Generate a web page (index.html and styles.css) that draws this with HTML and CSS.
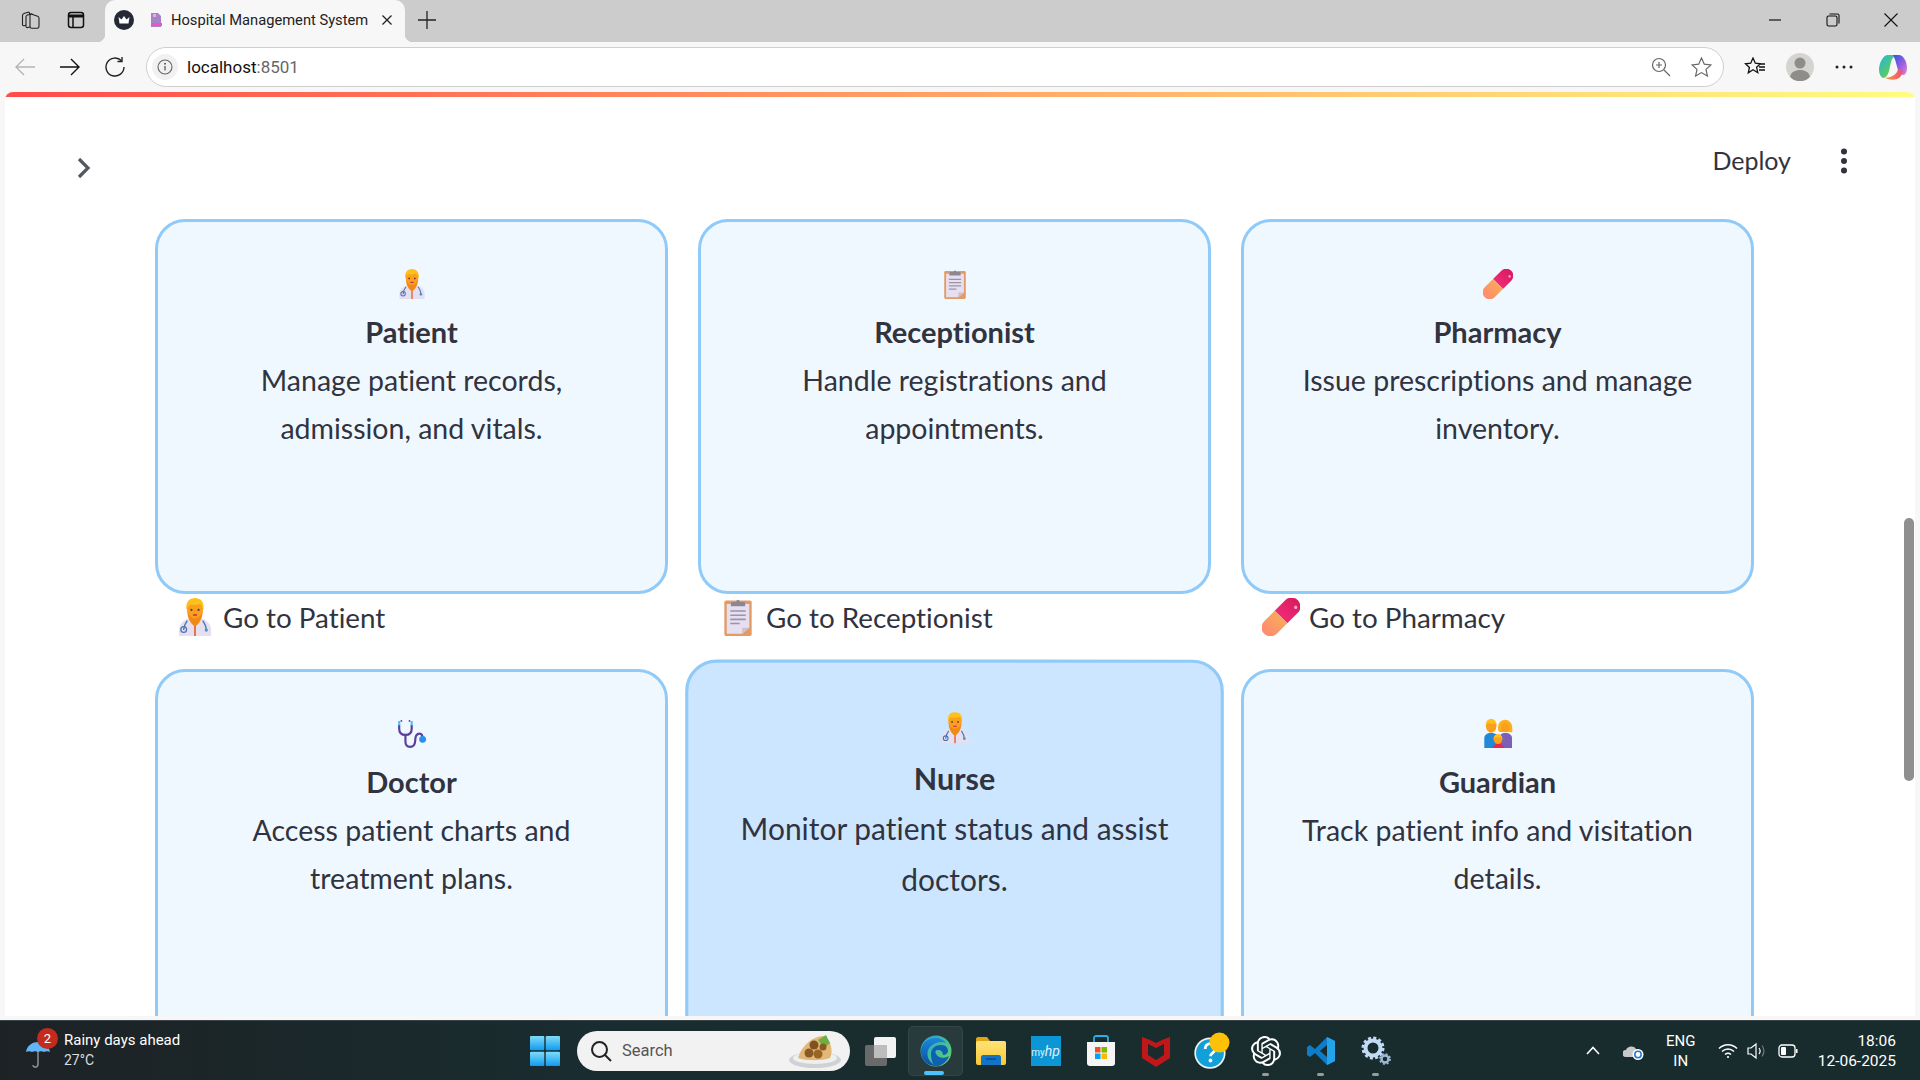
FILE: index.html
```html
<!DOCTYPE html>
<html>
	<head>
		<meta charset="utf-8">
		<title>Hospital Management System</title>
		<link rel="stylesheet" href="styles.css">
	</head>
	<body>
	<svg class="sprite" xmlns="http://www.w3.org/2000/svg">
		<defs>
			<linearGradient id="edgeGreen" x1="0" y1="0" x2="1" y2="1"><stop offset="0" stop-color="#1ba0e2"/><stop offset="1" stop-color="#6bd85a"/></linearGradient>
			<linearGradient id="edgeBlue" x1="0" y1="0" x2="0" y2="1"><stop offset="0" stop-color="#1b86d8"/><stop offset="1" stop-color="#0c4f9e"/></linearGradient>
			<linearGradient id="winBlue" x1="0" y1="0" x2="0" y2="1"><stop offset="0" stop-color="#7fdcf8"/><stop offset="1" stop-color="#0f9bf0"/></linearGradient>
			<linearGradient id="folder" x1="0" y1="0" x2="0" y2="1"><stop offset="0" stop-color="#ffe27a"/><stop offset="1" stop-color="#f8c92f"/></linearGradient>
			<linearGradient id="copA" x1="0" y1="0" x2="1" y2="1"><stop offset="0" stop-color="#23b5e8"/><stop offset=".6" stop-color="#55c96a"/><stop offset="1" stop-color="#f4d13b"/></linearGradient>
			<linearGradient id="copB" x1="0" y1="0" x2="1" y2="1"><stop offset="0" stop-color="#2458e0"/><stop offset=".6" stop-color="#a55ee0"/><stop offset="1" stop-color="#e38ad0"/></linearGradient>
			<linearGradient id="copC" x1="0" y1="0" x2="1" y2="0"><stop offset="0" stop-color="#f3a13c"/><stop offset="1" stop-color="#ee4d7a"/></linearGradient>
			<linearGradient id="pillPink" x1="0" y1="0" x2="0" y2="1"><stop offset="0" stop-color="#d81b60"/><stop offset="1" stop-color="#f02a76"/></linearGradient>
			<linearGradient id="pillOrange" x1="0" y1="0" x2="0" y2="1"><stop offset="0" stop-color="#f9a85c"/><stop offset="1" stop-color="#ff8a70"/></linearGradient>
		</defs>
		<symbol id="e-worker" viewBox="0 0 32 32">
			<path d="M2.500 32v-5c0-5 4-9 9-10h9c5 1 9 5 9 10v5z" fill="#e6dfef"/>
			<path d="M9.500 19c-2 3-3 5-3 8M22.500 19c2 3 3 5 3 8" stroke="#4a76b8" stroke-width="1.200" fill="none"/>
			<circle cx="6.500" cy="26.500" r="2.400" fill="none" stroke="#4a76b8" stroke-width="1.100"/>
			<circle cx="25.500" cy="27" r="1.400" fill="#3f9bd0"/>
			<path d="M16 16v16" stroke="#e5541f" stroke-width="1.300"/>
			<path d="M9.500 11c0 6 3 11 6.500 13 3.500-2 6.500-7 6.500-13z" fill="#f08a14"/>
			<ellipse cx="16" cy="9" rx="6.800" ry="8" fill="#fb9f1c"/>
			<path d="M8.800 10C8 3 11.500 0 16 0s8 3 7.200 10c-1-3-2-4.500-3.200-5-3 1-5.500 1-8 .5-1.500 1-2.700 2-3.200 4.500z" fill="#fcc21b"/>
			<circle cx="13" cy="10" r=".9" fill="#5b3a29"/><circle cx="19" cy="10" r=".9" fill="#5b3a29"/>
			<path d="M14.300 14.300h3.400" stroke="#c2185b" stroke-width="1.100"/>
		</symbol>
		<symbol id="e-clipboard" viewBox="0 0 32 32">
			<rect x="4.500" y="2" width="23" height="30" rx="1.500" fill="#e39a63"/>
			<path d="M6.500 5h19v20l-6 5h-13z" fill="#e6dff0"/>
			<path d="M25.500 25l-6 5v-5z" fill="#cdbfd4"/>
			<path d="M9.500 11h13M9.500 14.500h13M9.500 18h13M9.500 21.500h8" stroke="#9b93a8" stroke-width="1.300"/>
			<path d="M10 7V4.500c0-.8.500-1.200 1.200-1.200h3.300C15 1 17 1 17.500 3.300h3.300c.7 0 1.200.4 1.200 1.200V7z" fill="#8d8692"/>
		</symbol>
		<symbol id="e-pill" viewBox="0 0 32 32">
			<g transform="rotate(45 16 16)">
				<path d="M8.500 16V3.500a7.500 7.500 0 0 1 15 0V16z" fill="url(#pillPink)"/>
				<path d="M8.500 16v12.500a7.500 7.500 0 0 0 15 0V16z" fill="url(#pillOrange)"/>
				<circle cx="19" cy="1.500" r="1.400" fill="#f9a5c4"/>
			</g>
		</symbol>
		<symbol id="e-stetho" viewBox="78 56 96 96">
			<path d="M85 75v12q0 20 20 20t20-20V75" fill="none" stroke="#5b3fa0" stroke-width="7"/>
			<path d="M85 62v14M125 62v14" fill="none" stroke="#4fc3f7" stroke-width="7"/>
			<path d="M105 107v22q0 16 15 16t16-18q0-24 14-24 10 0 10 16" fill="none" stroke="#5b3fa0" stroke-width="7"/>
			<circle cx="160" cy="121" r="11" fill="#2b8ff0"/>
			<circle cx="92" cy="62" r="3" fill="#5b3fa0"/><circle cx="118" cy="62" r="3" fill="#5b3fa0"/>
		</symbol>
		<symbol id="e-family" viewBox="126 58 92 92">
			<path d="M130 147v-30c0-10 8-16 20-16s25 6 25 16v30z" fill="#2288d8"/>
			<path d="M175 147v-30c0-10 8-16 20-16s20 6 20 16v30z" fill="#7d5fb5"/>
			<ellipse cx="151" cy="80" rx="16" ry="20" fill="#fb9f1c"/>
			<path d="M135 80c-2-14 6-22 16-22s18 8 16 22c-2-6-4-8-6-9-6 2-14 2-20 0-2 2-4 5-6 9z" fill="#fcc21b"/>
			<path d="M172 92c-2-20 8-32 22-32s24 12 22 36c-2 4-6 4-8 2H178c-2 0-4-2-6-6z" fill="#fbb01c"/>
			<ellipse cx="194" cy="84" rx="13" ry="15" fill="#fb9f1c"/>
			<path d="M156 147c0-8 6-13 16-13s18 5 18 13z" fill="#e5284f"/>
			<ellipse cx="172" cy="120" rx="13" ry="15" fill="#fb9f1c"/>
			<path d="M159 122c-2-10 4-17 13-17s15 7 13 17c-2-5-4-7-6-8-4 1-10 1-14 0-2 2-4 4-6 8z" fill="#fcc21b"/>
		</symbol>
	</svg>

	<div class="tabstrip">
		<div class="strip-btn">
			<svg width="20" height="20" viewBox="0 0 20 20" fill="#cccccc" stroke="#222" stroke-width="1.100"><path d="M1.500 5.500c0-1 .6-1.600 1.500-1.900L7 2.200c1-.3 1.600.3 1.600 1.300v9c0 1-.5 1.600-1.400 1.900l-3.900 1.300c-1 .3-1.800-.3-1.800-1.300z"/><path d="M5 7c0-1 .6-1.600 1.500-1.900l3.500-1.200c1-.3 1.700.3 1.700 1.300v9.300c0 1-.5 1.600-1.400 1.900l-3.400 1.100c-1 .3-1.900-.3-1.900-1.300z"/><path d="M9 5.500c0-1 .9-1.500 1.800-1.200l5.800 2c.9.300 1.400 1 1.400 1.900v8.300c0 1-.7 1.700-1.700 1.700H10.800c-1 0-1.800-.8-1.800-1.800z"/></svg>
		</div>
		<div class="strip-btn">
			<svg width="18" height="18" viewBox="0 0 18 18" fill="none" stroke="#111" stroke-width="1.500"><rect x="1.500" y="1.500" width="15" height="15" rx="2.500"/><path d="M1.500 5h15" stroke-width="3"/><path d="M6 5.500v11"/></svg>
		</div>
		<div class="tab">
			<svg class="favicon" width="20" height="20" viewBox="0 0 20 20"><circle cx="10" cy="10" r="10" fill="#252935"/><path d="M4.500 7l3 2.500L10 6l2.500 3.500 3-2.500-1 6.500h-9z" fill="#fff"/></svg>
			<svg class="favicon2" width="12" height="16" viewBox="0 0 12 16"><path d="M1 1h7l3 3v11H1z" fill="#a583c4"/><rect x="3" y="2" width="3" height="3" fill="#f3a6d8"/><rect x="1" y="11" width="11" height="3" fill="#e857c8"/></svg>
			<span class="tab-title">Hospital Management System</span>
			<svg class="tab-x" width="12" height="12" viewBox="0 0 12 12" stroke="#222" stroke-width="1.300"><path d="M1.500 1.500l9 9M10.500 1.500l-9 9"/></svg>
		</div>
		<div class="new-tab">
			<svg width="18" height="18" viewBox="0 0 18 18" stroke="#222" stroke-width="1.300"><path d="M9 0v18M0 9h18"/></svg>
		</div>
		<div class="win-controls">
			<div class="win-btn"><svg width="14" height="14" viewBox="0 0 14 14" stroke="#111" stroke-width="1.200"><path d="M1 7h12"/></svg></div>
			<div class="win-btn"><svg width="14" height="14" viewBox="0 0 14 14" stroke="#111" stroke-width="1.100" fill="none"><rect x="1" y="3" width="10" height="10" rx="1.500"/><path d="M3.500 1H11.500A1.500 1.500 0 0 1 13 2.500V10.500"/></svg></div>
			<div class="win-btn"><svg width="14" height="14" viewBox="0 0 14 14" stroke="#111" stroke-width="1.100"><path d="M.5.500l13 13M13.500.500l-13 13"/></svg></div>
		</div>
	</div>

	<div class="toolbar">
		<div class="tool-btn"><svg width="20" height="18" viewBox="0 0 20 18" fill="none" stroke="#b5b5b5" stroke-width="1.400"><path d="M20 9H1M9 1L1 9l8 8"/></svg></div>
		<div class="tool-btn"><svg width="20" height="18" viewBox="0 0 20 18" fill="none" stroke="#111" stroke-width="1.400"><path d="M0 9h19M11 1l8 8-8 8"/></svg></div>
		<div class="tool-btn"><svg width="20" height="20" viewBox="0 0 20 20" fill="none" stroke="#222" stroke-width="1.400"><path d="M16.500 3.800A9 9 0 1 0 19 10"/><path d="M17 0v4.500h-4.500"/></svg></div>
		<div class="address">
			<div class="site-info"><svg width="16" height="16" viewBox="0 0 16 16" fill="none" stroke="#666" stroke-width="1.100"><circle cx="8" cy="8" r="7"/><path d="M8 7v4.500" stroke-width="1.400"/><circle cx="8" cy="4.800" r=".5"/></svg></div>
			<span class="url">localhost<span class="url-port">:8501</span></span>
			<div class="addr-icons">
				<svg width="20" height="20" viewBox="0 0 20 20" fill="none" stroke="#666" stroke-width="1.200"><circle cx="8" cy="8" r="6.500"/><path d="M8 5v6M5 8h6M13 13l6 6"/></svg>
				<svg width="21" height="20" viewBox="0 0 21 20" fill="none" stroke="#666" stroke-width="1.200"><path d="M10.500 1l2.800 6.200 6.700.7-5 4.500 1.400 6.600-5.900-3.400L4.600 19 6 12.400 1 7.900l6.700-.7z"/></svg>
			</div>
		</div>
		<div class="tool-right">
			<svg class="fav-ic" width="22" height="20" viewBox="0 0 22 20" fill="none" stroke="#111" stroke-width="1.300"><path d="M9 1l2.300 5.200 5.200.6-3.900 3.500 1.200 5.400-4.800-2.900-4.700 3L5.400 10.400 1.500 6.800l5.200-.6zM15 7h6M15 10h6M15 13h6"/></svg>
			<svg class="avatar" width="28" height="28" viewBox="0 0 28 28"><circle cx="14" cy="14" r="14" fill="#d5d4d0"/><circle cx="14" cy="10" r="5.500" fill="#8f8d89"/><path d="M4 24c1-5 5-7 10-7s9 2 10 7a14 14 0 0 1-20 0z" fill="#8f8d89"/></svg>
			<svg class="more" width="18" height="4" viewBox="0 0 18 4" fill="#222"><circle cx="2" cy="2" r="1.500"/><circle cx="9" cy="2" r="1.500"/><circle cx="16" cy="2" r="1.500"/></svg>
			<svg class="copilot" width="28" height="28" viewBox="0 0 28 28"><path d="M9 2h9c-3 1-5 3-6 7l-2 9c-1 4-3 7-6 7-2-1-4-4-4-8C0 10 4 2 9 2z" fill="url(#copA)"/><path d="M14 2h6c4 0 8 6 8 13 0 3-1 6-3 7-3 0-5-2-6-5l-2-7c-1-4-2-6-3-8z" fill="url(#copB)"/><path d="M6 25c5 2 8 2 12 1 3-1 5-4 6-8l-5-2c-1 5-5 8-13 9z" fill="url(#copC)"/></svg>
		</div>
	</div>

	<div class="page">
		<div class="decoration"></div>
		<div class="scroll-thumb"></div>
		<div class="app-header">
			<svg class="chevron" width="14" height="22" viewBox="0 0 14 22" fill="none" stroke="#555761" stroke-width="3.200"><path d="M2 2l9 9-9 9"/></svg>
			<span class="deploy">Deploy</span>
			<svg class="kebab" width="8" height="26" viewBox="0 0 8 26" fill="#31333f"><circle cx="4" cy="3.500" r="3"/><circle cx="4" cy="13" r="3"/><circle cx="4" cy="22.500" r="3"/></svg>
		</div>
		<div class="grid">
			<div class="cell">
				<div class="card">
					<svg class="emoji"><use href="#e-worker"/></svg>
					<h3>Patient</h3>
					<p>Manage patient records, admission, and vitals.</p>
				</div>
				<div class="go-link"><svg class="go-emoji"><use href="#e-worker"/></svg>Go to Patient</div>
			</div>
			<div class="cell">
				<div class="card">
					<svg class="emoji"><use href="#e-clipboard"/></svg>
					<h3>Receptionist</h3>
					<p>Handle registrations and appointments.</p>
				</div>
				<div class="go-link"><svg class="go-emoji"><use href="#e-clipboard"/></svg>Go to Receptionist</div>
			</div>
			<div class="cell">
				<div class="card">
					<svg class="emoji"><use href="#e-pill"/></svg>
					<h3>Pharmacy</h3>
					<p>Issue prescriptions and manage inventory.</p>
				</div>
				<div class="go-link"><svg class="go-emoji"><use href="#e-pill"/></svg>Go to Pharmacy</div>
			</div>
			<div class="cell">
				<div class="card">
					<svg class="emoji"><use href="#e-stetho"/></svg>
					<h3>Doctor</h3>
					<p>Access patient charts and treatment plans.</p>
				</div>
			</div>
			<div class="cell">
				<div class="card hovered">
					<svg class="emoji"><use href="#e-worker"/></svg>
					<h3>Nurse</h3>
					<p>Monitor patient status and assist doctors.</p>
				</div>
			</div>
			<div class="cell">
				<div class="card">
					<svg class="emoji"><use href="#e-family"/></svg>
					<h3>Guardian</h3>
					<p>Track patient info and visitation details.</p>
				</div>
			</div>
		</div>
	</div>

	<div class="taskbar">
		<div class="weather">
			<svg class="umbrella" width="26" height="30" viewBox="0 0 26 30"><path d="M13 12v13c0 4-5 4-5 1" fill="none" stroke="#8a8a8a" stroke-width="1.600"/><path d="M1 13C2 6 8 3 13 3s11 3 12 10c-2-1-4-1-6 0-2-1-4-1-6 0-2-1-4-1-6 0-2-1-4-1-6 0z" fill="#62b5f6"/></svg>
			<span class="badge">2</span>
			<div class="weather-text">
				<div>Rainy days ahead</div>
				<div class="temp">27°C</div>
			</div>
		</div>
		<div class="task-center">
			<div class="task-icon">
				<svg width="30" height="30" viewBox="0 0 30 30" fill="url(#winBlue)"><rect y="0" width="14.300" height="14.300" rx="1"/><rect x="15.700" y="0" width="14.300" height="14.300" rx="1"/><rect y="15.700" width="14.300" height="14.300" rx="1"/><rect x="15.700" y="15.700" width="14.300" height="14.300" rx="1"/></svg>
			</div>
			<div class="search">
				<svg width="22" height="22" viewBox="0 0 22 22" fill="none" stroke="#222" stroke-width="2"><circle cx="9.500" cy="9.500" r="7.500"/><path d="M15 15l6 6"/></svg>
				<span class="search-text">Search</span>
				<svg class="search-pic" width="54" height="34" viewBox="0 0 54 34"><ellipse cx="27" cy="26" rx="26" ry="8" fill="#cfd2d4"/><ellipse cx="27" cy="24" rx="22" ry="6" fill="#eef0f0"/><path d="M10 24C14 10 26 2 36 2c6 4 10 14 6 22-8 3-24 3-32 0z" fill="#e2b878"/><path d="M30 6l8-5 4 8-6 5z" fill="#6fae43"/><circle cx="21" cy="19" r="4.500" fill="#8a5a22"/><circle cx="30" cy="20" r="4.500" fill="#9a6426"/><circle cx="26" cy="11" r="4.500" fill="#7f5020"/><circle cx="35" cy="13" r="3.500" fill="#8a5a22"/></svg>
			</div>
			<div class="task-icon">
				<svg width="32" height="32" viewBox="0 0 32 32"><rect x="0" y="10" width="22" height="21" rx="2" fill="#6a6a6a"/><rect x="9" y="2" width="22" height="21" rx="2" fill="#f2f2f2"/><rect x="9" y="10" width="13" height="13" fill="#bdbdbd"/></svg>
			</div>
			<div class="task-icon active">
				<svg width="32" height="32" viewBox="0 0 32 32"><circle cx="16" cy="16" r="15.500" fill="url(#edgeGreen)"/><path d="M1 15C2 7 9 3 16 3c4 0 8 2 10 5-4-2-11-1-15 3-4 3-5 10-1 15 2 3 5 5 9 5C8 32 0 25 1 15z" fill="url(#edgeBlue)"/><path d="M11 19c0-6 5-9 10-9s7 3 7 6c0 2-2 4-5 4 0-3-2-5-5-5s-3 2-2 4c2 4 8 5 13 2-2 6-8 11-14 10-2-1-4-6-4-12z" fill="#0f5fb3"/></svg>
				<span class="run-bar"></span>
			</div>
			<div class="task-icon">
				<svg width="32" height="30" viewBox="0 0 32 30"><path d="M1 3c0-1 1-2 2-2h9l3 4h14c1 0 2 1 2 2v4H1z" fill="#e0a40f"/><rect x="1" y="5" width="30" height="24" rx="2" fill="url(#folder)"/><path d="M6 29v-8c0-1 1-2 2-2h16c1 0 2 1 2 2v8z" fill="#1273c9"/><path d="M11 23h10" stroke="#0b4a88" stroke-width="1.400"/></svg>
			</div>
			<div class="task-icon">
				<div class="myhp">my<i>hp</i></div>
			</div>
			<div class="task-icon">
				<svg width="30" height="32" viewBox="0 0 30 32"><path d="M8 7V3c0-1 1-2 2-2h10c1 0 2 1 2 2v4" fill="none" stroke="#2aaee6" stroke-width="1.800"/><path d="M1 7h28v21c0 2-1 3-3 3H4c-2 0-3-1-3-3z" fill="#f5f5f5"/><rect x="9" y="12" width="5.500" height="5.500" fill="#f25022"/><rect x="15.500" y="12" width="5.500" height="5.500" fill="#7fba00"/><rect x="9" y="18.500" width="5.500" height="5.500" fill="#00a4ef"/><rect x="15.500" y="18.500" width="5.500" height="5.500" fill="#ffb900"/></svg>
			</div>
			<div class="task-icon">
				<svg width="28" height="32" viewBox="0 0 28 32"><path d="M0 2l8 3 6 3 6-3 8-3v21l-14 9L0 23z" fill="#c01818"/><path d="M6 9v11l8 5 8-5V9l-8 4z" fill="#1b2a2c"/></svg>
			</div>
			<div class="task-icon">
				<svg width="38" height="38" viewBox="0 0 36 36"><circle cx="17" cy="20" r="14" fill="#12a0d8" stroke="#f2f2f2" stroke-width="1.600"/><path d="M12.500 16c0-3 2-5 5-5s5 2 5 4.500c0 4-5 4-5 7.500" fill="none" stroke="#fff" stroke-width="2.600"/><circle cx="17.500" cy="27" r="1.800" fill="#fff"/><circle cx="26" cy="10" r="9.500" fill="#ffc107"/></svg>
			</div>
			<div class="task-icon">
				<svg width="30" height="30" viewBox="0 0 24 24" fill="#fff"><path d="M22.2819 9.8211a5.9847 5.9847 0 0 0-.5157-4.9108 6.0462 6.0462 0 0 0-6.5098-2.9A6.0651 6.0651 0 0 0 4.9807 4.1818a5.9847 5.9847 0 0 0-3.9977 2.9 6.0462 6.0462 0 0 0 .7427 7.0966 5.98 5.98 0 0 0 .511 4.9107 6.051 6.051 0 0 0 6.5146 2.9001A5.9847 5.9847 0 0 0 13.2599 24a6.0557 6.0557 0 0 0 5.7718-4.2058 5.9894 5.9894 0 0 0 3.9977-2.9001 6.0557 6.0557 0 0 0-.7475-7.0729zm-9.022 12.6081a4.4755 4.4755 0 0 1-2.8764-1.0408l.1419-.0804 4.7783-2.7582a.7948.7948 0 0 0 .3927-.6813v-6.7369l2.02 1.1686a.071.071 0 0 1 .038.052v5.5826a4.504 4.504 0 0 1-4.4945 4.4944zm-9.6607-4.1254a4.4708 4.4708 0 0 1-.5346-3.0137l.142.0852 4.783 2.7582a.7712.7712 0 0 0 .7806 0l5.8428-3.3685v2.3324a.0804.0804 0 0 1-.0332.0615L9.74 19.9502a4.4992 4.4992 0 0 1-6.1408-1.6464zM2.3408 7.8956a4.485 4.485 0 0 1 2.3655-1.9728V11.6a.7664.7664 0 0 0 .3879.6765l5.8144 3.3543-2.0201 1.1685a.0757.0757 0 0 1-.071 0l-4.8303-2.7865A4.504 4.504 0 0 1 2.3408 7.872zm16.5963 3.8558L13.1038 8.364 15.1192 7.2a.0757.0757 0 0 1 .071 0l4.8303 2.7913a4.4944 4.4944 0 0 1-.6765 8.1042v-5.6772a.79.79 0 0 0-.407-.667zm2.0107-3.0231l-.142-.0852-4.7735-2.7818a.7759.7759 0 0 0-.7854 0L9.409 9.2297V6.8974a.0662.0662 0 0 1 .0284-.0615l4.8303-2.7866a4.4992 4.4992 0 0 1 6.6802 4.66zM8.3065 12.863l-2.02-1.1638a.0804.0804 0 0 1-.038-.0567V6.0742a4.4992 4.4992 0 0 1 7.3757-3.4537l-.142.0805L8.704 5.459a.7948.7948 0 0 0-.3927.6813zm1.0976-2.3654l2.602-1.4998 2.6069 1.4998v2.9994l-2.5974 1.4997-2.6067-1.4997Z"/></svg>
				<span class="run-dot"></span>
			</div>
			<div class="task-icon">
				<svg width="30" height="30" viewBox="0 0 30 30"><path d="M21 1l8 4v20l-8 4L9 17l-5 4-3-2v-8l3-2 5 4z" fill="#0e7cc8"/><path d="M21 1l8 4v20l-8 4z" fill="#23a3ea"/><path d="M21 9l-7 6 7 6z" fill="#1b2a2c"/></svg>
				<span class="run-dot"></span>
			</div>
			<div class="task-icon">
				<svg width="30" height="30" viewBox="0 0 30 30" fill="none"><circle cx="12" cy="12" r="7.500" stroke="#c3dcf5" stroke-width="4"/><circle cx="12" cy="12" r="10" stroke="#c3dcf5" stroke-width="3" stroke-dasharray="3 2.230"/><circle cx="24" cy="23" r="3.500" stroke="#9fb9d6" stroke-width="2.400"/><circle cx="24" cy="23" r="5" stroke="#9fb9d6" stroke-width="1.800" stroke-dasharray="2 1.930"/></svg>
				<span class="run-dot"></span>
			</div>
		</div>
		<div class="tray">
			<svg class="tray-up" width="14" height="9" viewBox="0 0 14 9" fill="none" stroke="#fff" stroke-width="1.600"><path d="M1 8l6-6.500L13 8"/></svg>
			<svg class="tray-cloud" width="21" height="18" viewBox="0 0 21 18"><path d="M3 15a3 3 0 0 1 0-7c1-4 8-5 10-1 3 0 4 2 4 4l-4 4z" fill="#c9c9c9"/><circle cx="15" cy="12.500" r="5.500" fill="#fff"/><circle cx="15" cy="12.500" r="3.200" fill="none" stroke="#1f78d1" stroke-width="1.500"/></svg>
			<div class="lang"><div>ENG</div><div>IN</div></div>
			<svg class="tray-wifi" width="20" height="16" viewBox="0 0 20 16" fill="none" stroke="#fff" stroke-width="1.500"><path d="M1 5.500c5-5 13-5 18 0M4 8.500c3.500-3.200 8.500-3.200 12 0M7 11.500c1.800-1.500 4.200-1.500 6 0"/><circle cx="10" cy="14" r="1.100" fill="#fff" stroke="none"/></svg>
			<svg class="tray-vol" width="20" height="18" viewBox="0 0 20 18" fill="none" stroke="#fff" stroke-width="1.200"><path d="M1 6h3l5-4v14l-5-4H1z"/><path d="M12 6c1.500 2 1.500 4 0 6"/><path d="M15 3.500c2.500 3.500 2.500 7.500 0 11" stroke="#777"/></svg>
			<svg class="tray-bat" width="20" height="14" viewBox="0 0 20 14"><rect x="1" y="1" width="16" height="12" rx="3" fill="none" stroke="#fff" stroke-width="1.300"/><rect x="3" y="3" width="5" height="8" rx="1" fill="#fff"/><rect x="18" y="5" width="1.500" height="4" fill="#fff"/></svg>
			<div class="clock"><div>18:06</div><div>12-06-2025</div></div>
		</div>
	</div>
	</body>
</html>
```

FILE: styles.css
```css
* {
	box-sizing: border-box;
}
html,
body {
	margin: 0;
	height: 100%;
	overflow: hidden;
}
body {
	display: flex;
	flex-direction: column;
	width: 1920px;
	height: 1080px;
	background: #f7f7f7;
	font-family: Roboto, "Liberation Sans", sans-serif;
}
.sprite {
	position: absolute;
	width: 0;
	height: 0;
}

/* browser tabs */
.tabstrip {
	display: flex;
	align-items: flex-start;
	height: 42px;
	background: #cccccc;
	padding-left: 8px;
}
.strip-btn {
	display: flex;
	justify-content: center;
	align-items: center;
	width: 45px;
	height: 40px;
}
.tab {
	position: relative;
	display: flex;
	align-items: center;
	width: 300px;
	height: 42px;
	margin-left: 7px;
	padding: 0 12px 2px 9px;
	background: #f7f7f7;
	border-radius: 10px 10px 0 0;
}
.tab::before,
.tab::after {
	content: "";
	position: absolute;
	bottom: 0;
	width: 8px;
	height: 8px;
}
.tab::before {
	left: -8px;
	background: radial-gradient(circle at 0 0, #cccccc 8px, #f7f7f7 8.500px);
}
.tab::after {
	right: -8px;
	background: radial-gradient(circle at 100% 0, #cccccc 8px, #f7f7f7 8.500px);
}
.favicon {
	flex: none;
}
.favicon2 {
	flex: none;
	margin-left: 16px;
}
.tab-title {
	margin-left: 9px;
	font-size: 14.700px;
	white-space: nowrap;
	color: #222;
}
.tab-x {
	margin-left: auto;
}
.new-tab {
	display: flex;
	justify-content: center;
	align-items: center;
	width: 44px;
	height: 40px;
}
.win-controls {
	display: flex;
	margin-left: auto;
}
.win-btn {
	display: flex;
	justify-content: center;
	align-items: center;
	width: 58px;
	height: 40px;
}

/* address row */
.toolbar {
	display: flex;
	align-items: center;
	height: 50px;
	padding-left: 2px;
}
.tool-btn {
	display: flex;
	justify-content: center;
	align-items: center;
	width: 45px;
	height: 50px;
}
.address {
	display: flex;
	align-items: center;
	width: 1578px;
	height: 40px;
	margin-left: 9px;
	padding-left: 5px;
	background: #fff;
	border: 1px solid #cfcfcf;
	border-radius: 20px;
}
.site-info {
	display: flex;
	justify-content: center;
	align-items: center;
	width: 26px;
	height: 26px;
	background: #f1f1f1;
	border-radius: 50%;
}
.url {
	margin-left: 9px;
	font-size: 17px;
	color: #111;
}
.url-port {
	color: #666;
}
.addr-icons {
	display: flex;
	align-items: center;
	gap: 20px;
	margin-left: auto;
	padding-right: 11px;
}
.tool-right {
	display: flex;
	align-items: center;
	padding-left: 20px;
}
.avatar {
	margin-left: 20px;
}
.more {
	margin-left: 21px;
}
.copilot {
	margin-left: 26px;
}

/* streamlit page */
.page {
	position: relative;
	height: 924px;
	margin: 0 5px;
	background: #fff;
	border-radius: 8px 8px 0 0;
	overflow: hidden;
	color: #31333f;
	font-family: Lato, "Noto Sans", sans-serif;
	font-variant-ligatures: none;
}
.decoration {
	height: 5px;
	background: linear-gradient(90deg, #ff4b4b, #fffd80);
}
.scroll-thumb {
	position: absolute;
	top: 426px;
	right: 1px;
	width: 10px;
	height: 263px;
	background: #8f8f8f;
	border-radius: 5px;
}
.app-header {
	display: flex;
	align-items: center;
	height: 122px;
	padding: 0 67px 0 72px;
	font-size: 25px;
}
.chevron {
	margin-top: 19px;
}
.deploy {
	margin-left: auto;
	margin-top: 4px;
}
.kebab {
	margin-left: 49px;
	margin-top: 5px;
}
.grid {
	display: grid;
	grid-template-columns: repeat(3, 513px);
	gap: 0 30px;
	padding-left: 150px;
}
.cell {
	height: 450px;
}
.card {
	height: 375px;
	padding-top: 38px;
	background: #f0f8ff;
	border: 3px solid #90caf9;
	border-radius: 30px;
	text-align: center;
}
.card.hovered {
	background: #cce6ff;
	transform: scale(1.05);
}
.emoji {
	display: block;
	width: 30px;
	height: 30px;
	margin: 9px auto;
}
.card h3 {
	margin: 0;
	font-size: 29px;
	font-weight: 700;
	line-height: 48px;
}
.card p {
	margin: 0 auto;
	width: 430px;
	font-size: 28.500px;
	line-height: 48px;
}
.go-link {
	display: flex;
	align-items: center;
	height: 46px;
	padding-left: 21px;
	font-size: 27.800px;
}
.go-emoji {
	width: 38px;
	height: 38px;
	margin-right: 9px;
}

/* windows taskbar */
.taskbar {
	display: flex;
	align-items: center;
	height: 60px;
	margin-top: 4px;
	background: linear-gradient(90deg, #1d2225, #192c2f 30%, #182c2e);
	color: #fff;
	font-family: Roboto, "Liberation Sans", sans-serif;
	font-size: 15px;
	border-top: 1px solid #3a4547;
}
.weather {
	position: relative;
	display: flex;
	align-items: center;
	width: 517px;
	padding-left: 25px;
}
.umbrella {
	flex: none;
	margin-top: 6px;
}
.badge {
	position: absolute;
	top: -4px;
	left: 37px;
	width: 21px;
	height: 21px;
	background: #c42b1c;
	border-radius: 50%;
	font-size: 13px;
	line-height: 21px;
	text-align: center;
}
.weather-text {
	margin-left: 13px;
	margin-top: -2px;
	line-height: 20px;
}
.temp {
	color: #ddd;
	font-size: 14px;
}
.task-center {
	display: flex;
	align-items: center;
}
.task-icon {
	position: relative;
	display: flex;
	justify-content: center;
	align-items: center;
	width: 55px;
	height: 50px;
}
.task-icon.active {
	background: rgba(255, 255, 255, .07);
	border: 1px solid rgba(255, 255, 255, .06);
	border-radius: 5px;
}
.run-bar {
	position: absolute;
	bottom: 0;
	left: 15px;
	width: 20px;
	height: 4px;
	background: #4cc2ff;
	border-radius: 2px;
}
.run-dot {
	position: absolute;
	bottom: 0;
	left: 24px;
	width: 7px;
	height: 3px;
	background: #9a9a9a;
	border-radius: 2px;
}
.search {
	display: flex;
	align-items: center;
	width: 273px;
	height: 40px;
	margin: 0 3px 0 5px;
	padding: 0 8px 0 13px;
	background: #f2f2f2;
	border-radius: 20px;
}
.search-text {
	margin-left: 10px;
	font-size: 16.500px;
	color: #555;
}
.search-pic {
	margin-left: auto;
}
.myhp {
	width: 30px;
	height: 30px;
	background: #0d96d6;
	font-size: 10px;
	line-height: 30px;
	text-align: center;
	color: #dff3fc;
}
.myhp i {
	font-size: 14px;
}
.tray {
	display: flex;
	align-items: center;
	margin-left: auto;
	padding-right: 24px;
}
.tray-cloud {
	margin-left: 23px;
}
.lang {
	margin-left: 19px;
	width: 36px;
	text-align: center;
	line-height: 20px;
}
.tray-wifi {
	margin-left: 19px;
}
.tray-vol {
	margin-left: 9px;
}
.tray-bat {
	margin-left: 11px;
}
.clock {
	margin-left: 20px;
	text-align: right;
	font-size: 15.500px;
	line-height: 20px;
}
```
